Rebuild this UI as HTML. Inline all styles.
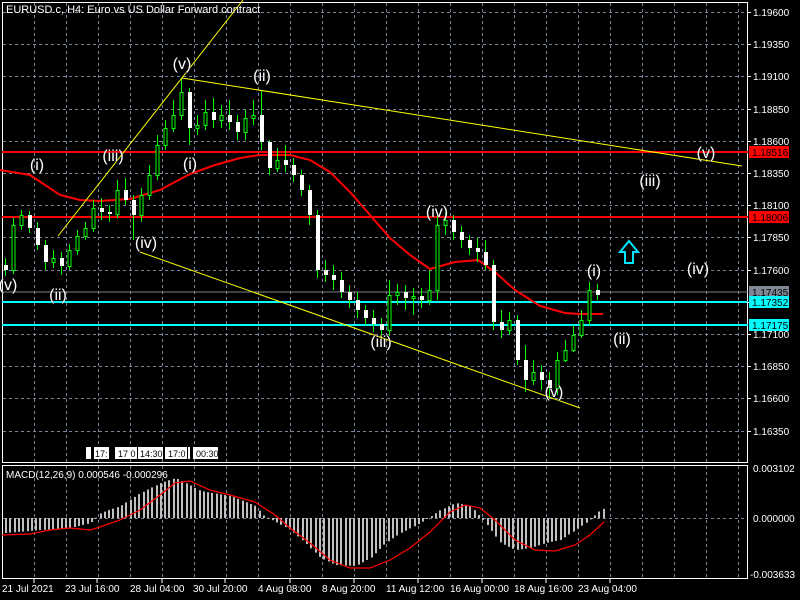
<!DOCTYPE html>
<html><head><meta charset="utf-8"><style>
html,body{margin:0;padding:0;background:#000;width:800px;height:600px;overflow:hidden}
svg{display:block;font-family:"Liberation Sans",sans-serif}
</style></head><body>
<svg id="s" width="800" height="600" xmlns="http://www.w3.org/2000/svg">
<rect width="800" height="600" fill="#000"/>
<g id="grid" stroke="#7a8599" stroke-dasharray="3,3" stroke-width="1"></g>
<rect x="2.5" y="2.5" width="745" height="460" fill="none" stroke="#fff"/>
<rect x="2.5" y="465.5" width="745" height="113" fill="none" stroke="#fff"/>
<g id="hist" fill="#c0c0c0"></g>
<polyline id="sig" fill="none" stroke="#ff0000" stroke-width="1.2"/>
<line x1="2" y1="152" x2="748" y2="152" stroke="#ff0000" stroke-width="2"/>
<line x1="2" y1="217" x2="748" y2="217" stroke="#ff0000" stroke-width="2"/>
<line x1="2" y1="292" x2="748" y2="292" stroke="#808080" stroke-width="1"/>
<line x1="2" y1="302" x2="748" y2="302" stroke="#00ffff" stroke-width="2"/>
<line x1="2" y1="325" x2="748" y2="325" stroke="#00ffff" stroke-width="2"/>
<polyline points="0,170 30,175 60,195 80,200 100,201 130,199 160,190 190,174 215,165 240,158 260,155 290,155 310,160 330,172 350,192 370,215 390,238 410,255 430,269 455,262 478,260 495,272 515,290 540,306 565,313 580,314 603,314" fill="none" stroke="#ff0000" stroke-width="2"/>
<path stroke="#00ff00" stroke-width="1" fill="none" d="M5.5 258V276M13.5 218V274M21.5 210V230M29.5 211V233M37.5 222V250M45.5 240V270M53.5 250V268M61.5 252V275M69.5 244V270M77.5 230V255M85.5 222V240M93.5 200V232M101.5 198V220M109.5 205V222M117.5 180V218M125.5 178V205M133.5 195V240M141.5 188V222M149.5 165V200M157.5 135V180M165.5 120V150M173.5 100V132M181.5 78V120M189.5 88V145M197.5 115V135M205.5 100V130M213.5 98V128M221.5 105V128M229.5 100V130M237.5 115V140M245.5 110V140M253.5 100V125M261.5 90V150M269.5 140V175M277.5 148V172M285.5 145V172M293.5 158V182M301.5 170V196M309.5 185V225M317.5 210V278M325.5 260V282M333.5 265V290M341.5 272V298M349.5 285V308M357.5 292V318M365.5 305V325M373.5 310V332M381.5 318V338M389.5 280V336M397.5 284V305M405.5 285V310M413.5 288V315M421.5 288V308M429.5 270V305M437.5 215V300M445.5 212V235M453.5 215V240M461.5 226V248M469.5 235V255M477.5 238V262M485.5 240V270M493.5 260V330M501.5 310V338M509.5 312V335M517.5 315V365M525.5 345V392M533.5 360V385M541.5 365V390M549.5 372V398M557.5 352V395M565.5 340V362M573.5 325V352M581.5 310V338M589.5 282V325M597.5 284V300"/>
<g fill="#fff">
<rect x="4" y="265" width="4" height="5"/><rect x="28" y="215" width="4" height="13"/><rect x="36" y="228" width="4" height="17"/><rect x="44" y="245" width="4" height="17"/><rect x="60" y="258" width="4" height="8"/><rect x="100" y="208" width="4" height="4"/><rect x="108" y="212" width="4" height="2"/><rect x="124" y="190" width="4" height="10"/><rect x="132" y="200" width="4" height="15"/><rect x="188" y="92" width="4" height="36"/><rect x="212" y="112" width="4" height="8"/><rect x="228" y="115" width="4" height="7"/><rect x="236" y="122" width="4" height="10"/><rect x="260" y="115" width="4" height="27"/><rect x="268" y="142" width="4" height="26"/><rect x="284" y="160" width="4" height="5"/><rect x="292" y="165" width="4" height="10"/><rect x="300" y="175" width="4" height="15"/><rect x="308" y="190" width="4" height="25"/><rect x="316" y="215" width="4" height="55"/><rect x="324" y="270" width="4" height="5"/><rect x="332" y="275" width="4" height="5"/><rect x="340" y="280" width="4" height="12"/><rect x="348" y="292" width="4" height="8"/><rect x="356" y="300" width="4" height="10"/><rect x="364" y="310" width="4" height="8"/><rect x="372" y="318" width="4" height="6"/><rect x="380" y="324" width="4" height="6"/><rect x="404" y="292" width="4" height="6"/><rect x="420" y="296" width="4" height="4"/><rect x="452" y="220" width="4" height="12"/><rect x="460" y="232" width="4" height="8"/><rect x="468" y="240" width="4" height="8"/><rect x="476" y="248" width="4" height="4"/><rect x="484" y="252" width="4" height="13"/><rect x="492" y="265" width="4" height="57"/><rect x="500" y="322" width="4" height="8"/><rect x="516" y="320" width="4" height="40"/><rect x="524" y="360" width="4" height="20"/><rect x="540" y="372" width="4" height="8"/><rect x="548" y="380" width="4" height="8"/><rect x="596" y="290" width="4" height="5"/>
</g>
<g fill="#000" stroke="#00ff00" stroke-width="1">
<rect x="12" y="225.5" width="3" height="45"/><rect x="20" y="215.5" width="3" height="10"/><rect x="52" y="258.5" width="3" height="4"/><rect x="68" y="250.5" width="3" height="16"/><rect x="76" y="236.5" width="3" height="14"/><rect x="84" y="228.5" width="3" height="8"/><rect x="92" y="208.5" width="3" height="20"/><rect x="116" y="190.5" width="3" height="24"/><rect x="140" y="195.5" width="3" height="20"/><rect x="148" y="175.5" width="3" height="20"/><rect x="156" y="145.5" width="3" height="30"/><rect x="164" y="128.5" width="3" height="17"/><rect x="172" y="115.5" width="3" height="13"/><rect x="180" y="92.5" width="3" height="23"/><rect x="196" y="125.5" width="3" height="3"/><rect x="204" y="112.5" width="3" height="13"/><rect x="220" y="115.5" width="3" height="5"/><rect x="244" y="118.5" width="3" height="14"/><rect x="252" y="115.5" width="3" height="3"/><rect x="276" y="160.5" width="3" height="8"/><rect x="388" y="295.5" width="3" height="35"/><rect x="396" y="292.5" width="3" height="3"/><rect x="412" y="296.5" width="3" height="2"/><rect x="428" y="290.5" width="3" height="10"/><rect x="436" y="225.5" width="3" height="65"/><rect x="444" y="220.5" width="3" height="5"/><rect x="508" y="320.5" width="3" height="10"/><rect x="532" y="372.5" width="3" height="8"/><rect x="556" y="360.5" width="3" height="28"/><rect x="564" y="350.5" width="3" height="10"/><rect x="572" y="335.5" width="3" height="15"/><rect x="580" y="320.5" width="3" height="15"/><rect x="588" y="290.5" width="3" height="30"/>
</g>
<g stroke="#ffff00" stroke-width="1" fill="none">
<line x1="58" y1="236" x2="243" y2="0"/>
<line x1="182" y1="78" x2="742" y2="166"/>
<line x1="140" y1="252" x2="580" y2="408"/>
</g>
<polygon points="629,241 638,252 633,252 633,263 625,263 625,252 620,252" fill="none" stroke="#00e5ff" stroke-width="2"/>
<g font-size="16" fill="#fff" stroke="#000" stroke-width="0.4" paint-order="stroke" text-anchor="middle">
<text x="182" y="69">(v)</text><text x="262" y="81">(ii)</text><text x="37" y="170">(i)</text>
<text x="113" y="161">(iii)</text><text x="190" y="169">(i)</text><text x="146" y="248">(iv)</text>
<text x="8" y="290">(v)</text><text x="58" y="300">(ii)</text><text x="381" y="347">(iii)</text>
<text x="437" y="217">(iv)</text><text x="554" y="397">(v)</text><text x="594" y="276">(i)</text>
<text x="622" y="344">(ii)</text><text x="650" y="186">(iii)</text><text x="698" y="274">(iv)</text>
<text x="706" y="158">(v)</text>
</g>
<text x="6" y="13" font-size="11" fill="#fff">EURUSD.c, H4:  Euro vs US Dollar Forward contract</text>
<text x="6" y="478" font-size="10" fill="#fff">MACD(12,26,9) 0.000546 -0.000296</text>
<g id="ax" font-size="10" fill="#fff"></g>
<g font-size="9" fill="#000">
<rect x="86" y="447" width="5" height="12" fill="#fff"/><rect x="94" y="447" width="15" height="12" fill="#fff"/><text x="95" y="457">17:</text>
<rect x="115" y="447" width="22" height="12" fill="#fff"/><text x="118" y="457">17 0</text>
<rect x="138" y="447" width="25" height="12" fill="#fff"/><text x="140" y="457">14:30</text>
<rect x="165" y="447" width="22" height="12" fill="#fff"/><text x="168" y="457">17:0</text>
<rect x="188" y="447" width="2" height="12" fill="#fff"/><rect x="193" y="447" width="25" height="12" fill="#fff"/><text x="196" y="457">00:30</text>
</g>
<g font-size="10" fill="#000">
<rect x="749" y="146" width="40" height="12" fill="#ff0000"/><text x="752" y="156">1.18516</text>
<rect x="749" y="211" width="40" height="12" fill="#ff0000"/><text x="752" y="221">1.18006</text>
<rect x="749" y="286" width="40" height="12" fill="#808898"/><text x="752" y="296">1.17435</text>
<rect x="749" y="296" width="40" height="12" fill="#00ffff"/><text x="752" y="306">1.17352</text>
<rect x="749" y="319" width="40" height="12" fill="#00ffff"/><text x="752" y="329">1.17175</text>
</g>
</svg>
<script>
var NS="http://www.w3.org/2000/svg";
function el(t,a,p){var e=document.createElementNS(NS,t);for(var k in a)e.setAttribute(k,a[k]);document.getElementById(p).appendChild(e);return e;}
function interp(pts,x){for(var i=1;i<pts.length;i++){if(x<=pts[i][0]){var a=pts[i-1],b=pts[i];return a[1]+(b[1]-a[1])*(x-a[0])/(b[0]-a[0]);}}return pts[pts.length-1][1];}
for(var x=34;x<748;x+=32){el("line",{x1:x+.5,y1:3,x2:x+.5,y2:462},"grid");el("line",{x1:x+.5,y1:466,x2:x+.5,y2:578},"grid");}
var prices=["1.19600","1.19350","1.19100","1.18850","1.18600","1.18350","1.18100","1.17850","1.17600","1.17350","1.17100","1.16850","1.16600","1.16350"];
for(var i=0;i<14;i++){var y=Math.round(12+i*32.2);el("line",{x1:3,y1:y+.5,x2:747,y2:y+.5},"grid");
 el("line",{x1:747,y1:y+.5,x2:751,y2:y+.5,stroke:"#fff"},"ax");var t=el("text",{x:753,y:y+4},"ax");t.textContent=prices[i];}
el("line",{x1:3,y1:518.5,x2:747,y2:518.5},"grid");
[["0.003102",472],["0.000000",522],["-0.003633",578]].forEach(function(p){var t=el("text",{x:p[0][0]=="-"?750:753,y:p[1]},"ax");t.textContent=p[0];});
var tl=[["21 Jul 2021",2],["23 Jul 16:00",65],["28 Jul 04:00",130],["30 Jul 20:00",193],["4 Aug 08:00",258],["8 Aug 20:00",322],["11 Aug 12:00",386],["16 Aug 00:00",450],["18 Aug 16:00",514],["23 Aug 04:00",578]];
tl.forEach(function(p){var t=el("text",{x:p[1],y:592},"ax");t.textContent=p[0];el("line",{x1:p[1]+32,y1:579,x2:p[1]+32,y2:583,stroke:"#fff"},"ax");});
var hp=[[5,-15],[40,-12],[70,-10],[90,-5],[100,5],[120,12],[140,25],[160,35],[175,40],[185,35],[200,27],[230,22],[255,12],[262,3],[275,-4],[290,-12],[305,-25],[320,-40],[335,-47],[355,-48],[370,-40],[385,-25],[400,-15],[420,-5],[440,8],[455,15],[470,12],[485,-5],[500,-25],[515,-32],[530,-30],[545,-25],[560,-22],[575,-12],[588,-3],[600,8],[605,10]];
for(var x=5;x<=605;x+=4.3){var v=interp(hp,x);var bx=Math.round(x);el("rect",{x:bx,y:v>0?518-v:518,width:2,height:Math.max(Math.abs(v),1)},"hist");}
var sp=[[2,535],[30,534],[50,530],[70,528],[90,530],[100,527],[120,520],[140,510],[160,495],[175,483],[190,481],[210,490],[230,495],[255,502],[275,515],[290,528],[310,543],[330,560],[350,568],[370,568],[390,560],[410,548],[430,532],[450,512],[465,505],[480,508],[495,520],[515,540],[535,550],[555,551],[575,545],[590,535],[604,522]];
document.getElementById("sig").setAttribute("points",sp.map(function(p){return p.join(",")}).join(" "));
</script>
</body></html>
